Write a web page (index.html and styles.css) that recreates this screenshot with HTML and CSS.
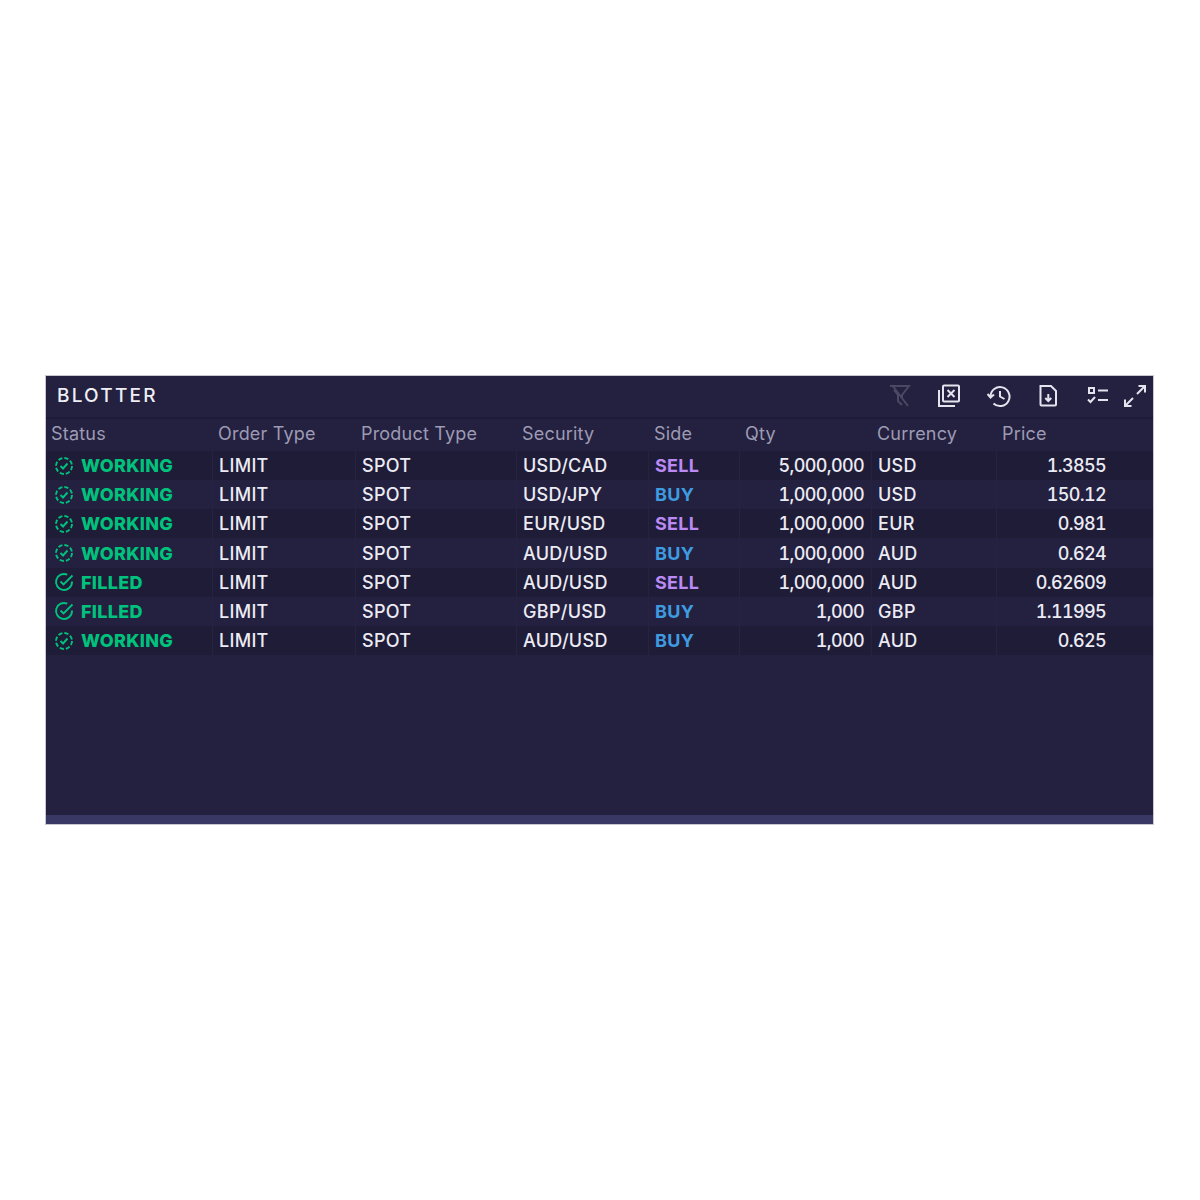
FILE: index.html
```html
<!DOCTYPE html>
<html lang="en">
<head>
<meta charset="utf-8">
<title>Blotter</title>
<link rel="stylesheet" href="styles.css">
</head>
<body>
<section class="panel">
  <header class="titlebar">
    <h1 class="title">BLOTTER</h1>
    <div class="tools">
      <svg class="tool dim" viewBox="0 0 24 24"><path d="M2 2h19l-7 9v3M6 6l4 5v6l4 4M4 1l16 21"/></svg>
      <svg class="tool" viewBox="0 0 24 24"><rect x="6" y="1.500" width="16" height="16" rx="1"/><path d="M2 6v16h16M10.500 6l7 7M17.500 6l-7 7"/></svg>
      <svg class="tool" viewBox="0 0 24 24"><path d="M3.500 12.500a9.500 9.500 0 1 1 3 7M0.500 10l3 3.500 3.500-3M13 7v5.500l4.500 2.500"/></svg>
      <svg class="tool" viewBox="0 0 24 24"><path d="M4.500 2h10.500l5 5v13.500a1 1 0 0 1-1 1H5.500a1 1 0 0 1-1-1zM12.300 10v7M9.300 14l3 3 3-3"/></svg>
      <svg class="tool list" viewBox="0 0 24 24"><rect x="3" y="4" width="5" height="5"/><path d="M12 6.500h10M12 16h10M2 15.500l2.500 2.500 4.500-5"/></svg>
      <svg class="tool expand" viewBox="0 0 24 24"><path d="M14 10l8-8M15.500 2H22v6.500M10 14l-8 8M2 15.500V22h6.500"/></svg>
    </div>
  </header>
  <div class="grid head">
    <div>Status</div><div>Order Type</div><div>Product Type</div><div>Security</div><div>Side</div><div>Qty</div><div>Currency</div><div>Price</div>
  </div>
  <div class="rows">
    <div class="grid row">
      <div class="cell status"><svg class="st" viewBox="0 0 20 20"><circle class="dash" cx="10" cy="10" r="8"/><path d="M6.500 10l2.500 2.500 4.500-5"/></svg>WORKING</div>
      <div class="cell">LIMIT</div><div class="cell">SPOT</div><div class="cell">USD/CAD</div><div class="cell sell">SELL</div><div class="cell num">5,000,000</div><div class="cell">USD</div><div class="cell num">1.3855</div>
    </div>
    <div class="grid row">
      <div class="cell status"><svg class="st" viewBox="0 0 20 20"><circle class="dash" cx="10" cy="10" r="8"/><path d="M6.500 10l2.500 2.500 4.500-5"/></svg>WORKING</div>
      <div class="cell">LIMIT</div><div class="cell">SPOT</div><div class="cell">USD/JPY</div><div class="cell buy">BUY</div><div class="cell num">1,000,000</div><div class="cell">USD</div><div class="cell num">150.12</div>
    </div>
    <div class="grid row">
      <div class="cell status"><svg class="st" viewBox="0 0 20 20"><circle class="dash" cx="10" cy="10" r="8"/><path d="M6.500 10l2.500 2.500 4.500-5"/></svg>WORKING</div>
      <div class="cell">LIMIT</div><div class="cell">SPOT</div><div class="cell">EUR/USD</div><div class="cell sell">SELL</div><div class="cell num">1,000,000</div><div class="cell">EUR</div><div class="cell num">0.981</div>
    </div>
    <div class="grid row">
      <div class="cell status"><svg class="st" viewBox="0 0 20 20"><circle class="dash" cx="10" cy="10" r="8"/><path d="M6.500 10l2.500 2.500 4.500-5"/></svg>WORKING</div>
      <div class="cell">LIMIT</div><div class="cell">SPOT</div><div class="cell">AUD/USD</div><div class="cell buy">BUY</div><div class="cell num">1,000,000</div><div class="cell">AUD</div><div class="cell num">0.624</div>
    </div>
    <div class="grid row">
      <div class="cell status"><svg class="st" viewBox="0 0 20 20"><path d="M18 9.500V10a8 8 0 1 1-4.700-7.300M6.500 9.500l3 3L18.500 3.500"/></svg>FILLED</div>
      <div class="cell">LIMIT</div><div class="cell">SPOT</div><div class="cell">AUD/USD</div><div class="cell sell">SELL</div><div class="cell num">1,000,000</div><div class="cell">AUD</div><div class="cell num">0.62609</div>
    </div>
    <div class="grid row">
      <div class="cell status"><svg class="st" viewBox="0 0 20 20"><path d="M18 9.500V10a8 8 0 1 1-4.700-7.300M6.500 9.500l3 3L18.500 3.500"/></svg>FILLED</div>
      <div class="cell">LIMIT</div><div class="cell">SPOT</div><div class="cell">GBP/USD</div><div class="cell buy">BUY</div><div class="cell num">1,000</div><div class="cell">GBP</div><div class="cell num">1.11995</div>
    </div>
    <div class="grid row">
      <div class="cell status"><svg class="st" viewBox="0 0 20 20"><circle class="dash" cx="10" cy="10" r="8"/><path d="M6.500 10l2.500 2.500 4.500-5"/></svg>WORKING</div>
      <div class="cell">LIMIT</div><div class="cell">SPOT</div><div class="cell">AUD/USD</div><div class="cell buy">BUY</div><div class="cell num">1,000</div><div class="cell">AUD</div><div class="cell num">0.625</div>
    </div>
  </div>
  <div class="filler"></div>
  <div class="footer"></div>
</section>
</body>
</html>
```
FILE: styles.css
```css
* { box-sizing: border-box; }
html, body { margin: 0; background: #fff; }
body { padding: 375px 46px 0 45px; font-family: "Inter", "Noto Sans", sans-serif; }
.panel {
  height: 450px;
  display: flex;
  flex-direction: column;
  background: #232040;
  border: 1px solid #c8c7d2;
}
.titlebar {
  height: 43px;
  flex: none;
  display: flex;
  align-items: center;
  justify-content: space-between;
  padding: 0 6px 2px 11px;
  border-bottom: 2px solid #1e1b38;
}
.title { margin: 0; font-size: 19px; font-weight: 500; letter-spacing: 2.2px; color: #eeeef4; }
.tools { display: flex; gap: 25.6px; align-items: center; }
.tool { width: 24px; height: 24px; fill: none; stroke: #e4e3ee; stroke-width: 2; }
.tool.dim { stroke: #4b4863; }
.tool.expand { margin-left: -12.500px; }
.grid {
  display: grid;
  grid-template-columns: 167px 143px 161px 132px 91px 132px 125px 116px 40px;
}
.head { height: 32px; align-items: center; color: #9d9bb3; font-size: 18px; letter-spacing: 0.2px; padding-bottom: 3px; }
.head > div { padding-left: 5px; }
.row { height: 29.17px; font-size: 18px; color: #ecebf3; letter-spacing: 0.3px; font-weight: 450; }
.row:nth-child(odd) { background: #1f1c38; }
.cell {
  display: flex;
  align-items: center;
  padding-left: 6px;
  border-right: 1px solid #262342;
  white-space: nowrap;
}
.cell:last-child { border-right: 0; }
.num { justify-content: flex-end; padding: 0 7px 0 0; font-variant-numeric: tabular-nums; letter-spacing: -0.65px; }
.status { color: #00c27c; font-weight: 800; padding-left: 8px; gap: 7px; letter-spacing: 0.3px; }
.sell { color: #bb8af2; font-weight: 700; }
.buy { color: #3f9be0; font-weight: 700; }
.st { width: 20px; height: 20px; fill: none; stroke: #00c27c; stroke-width: 1.9; flex: none; }
.dash { stroke-dasharray: 4.3 2; }
.filler { flex: 1; }
.footer { height: 9px; background: #393763; flex: none; }
```
